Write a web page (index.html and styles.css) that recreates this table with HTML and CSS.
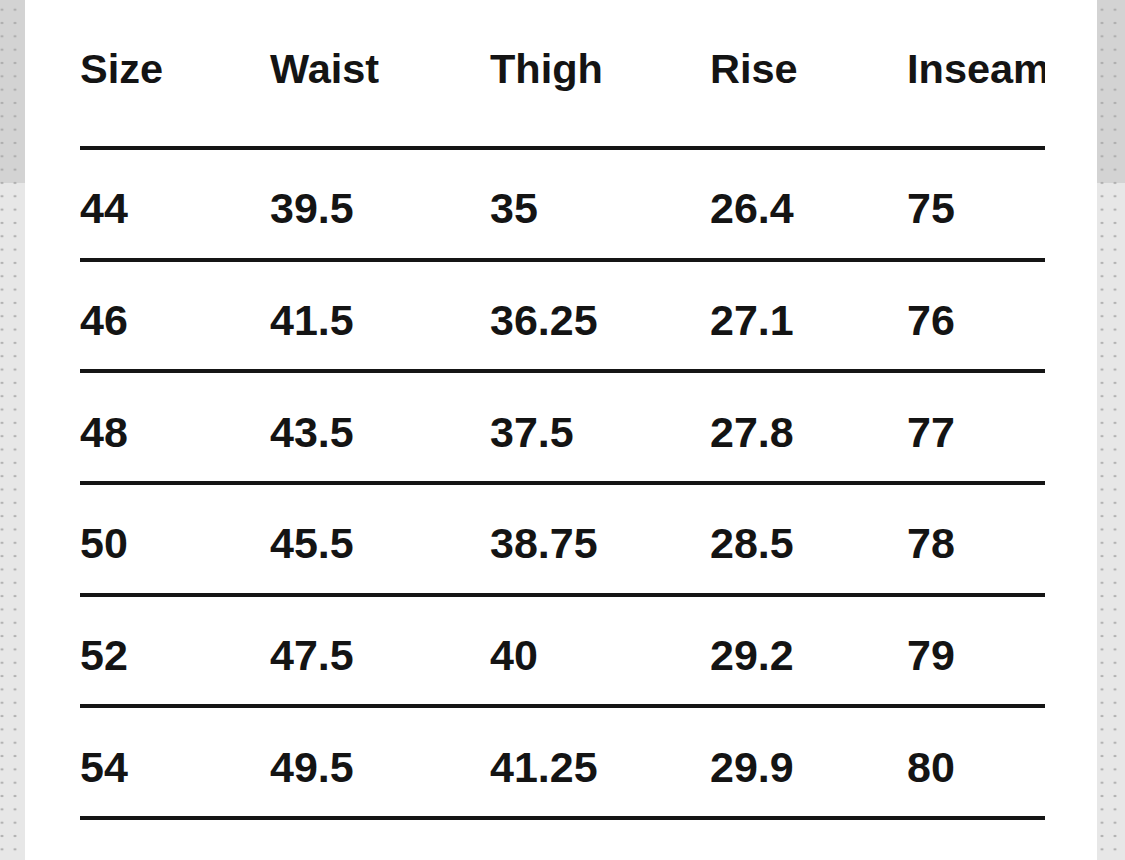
FILE: index.html
```html
<!DOCTYPE html>
<html lang="en">
<head>
<meta charset="utf-8">
<title>Size chart</title>
<link rel="stylesheet" href="styles.css">
</head>
<body>
<div class="page">
  <div class="strip strip-left"></div>
  <main class="panel">
    <div class="chart">
      <div class="row head">
        <span>Size</span><span>Waist</span><span>Thigh</span><span>Rise</span><span>Inseam</span>
      </div>
      <div class="row"><span>44</span><span>39.5</span><span>35</span><span>26.4</span><span>75</span></div>
      <div class="row"><span>46</span><span>41.5</span><span>36.25</span><span>27.1</span><span>76</span></div>
      <div class="row"><span>48</span><span>43.5</span><span>37.5</span><span>27.8</span><span>77</span></div>
      <div class="row"><span>50</span><span>45.5</span><span>38.75</span><span>28.5</span><span>78</span></div>
      <div class="row"><span>52</span><span>47.5</span><span>40</span><span>29.2</span><span>79</span></div>
      <div class="row"><span>54</span><span>49.5</span><span>41.25</span><span>29.9</span><span>80</span></div>
    </div>
  </main>
  <div class="strip strip-right"></div>
</div>
</body>
</html>
```
FILE: styles.css
```css
html, body {
  margin: 0;
  padding: 0;
  background: #ffffff;
}
.page {
  display: flex;
  width: 1125px;
  height: 860px;
  overflow: hidden;
}
.strip {
  flex: none;
  height: 100%;
  background-image:
    radial-gradient(circle at 50% 50%, #a8a8a8 0, #a8a8a8 0.9px, rgba(168,168,168,0) 1.5px),
    linear-gradient(to bottom, #d3d3d3 0, #d3d3d3 183px, #e7e7e7 183px, #e7e7e7 100%);
  background-size: 13px 13.33px, 100% 100%;
  background-repeat: repeat, no-repeat;
}
.strip-left {
  width: 25px;
  background-position: -4.5px 3px, 0 0;
}
.strip-right {
  width: 28px;
  background-position: -1.5px 3px, 0 0;
}
.panel {
  flex: 1;
  background: #ffffff;
  padding-left: 55px;
}
.chart {
  width: 965px;
  overflow: hidden;
  font-family: "Liberation Sans", Arial, sans-serif;
  font-weight: 700;
  font-size: 43px;
  line-height: 41px;
  color: #141414;
}
.row {
  display: grid;
  grid-template-columns: 190px 220px 220px 197px 1fr;
  box-sizing: border-box;
  height: 111.7px;
  padding-top: 38.2px;
  border-bottom: 4px solid #151515;
  white-space: nowrap;
}
.row.head {
  height: 150px;
  padding-top: 47.6px;
  font-size: 41.5px;
}
.row span {
  display: block;
}
```
